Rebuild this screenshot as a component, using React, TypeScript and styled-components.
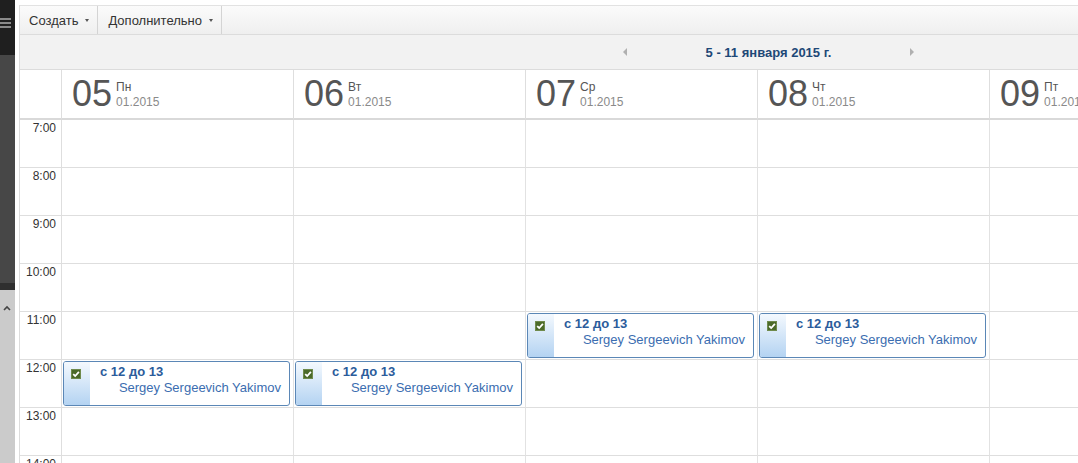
import React from 'react';
import styled, { createGlobalStyle } from 'styled-components';

const GlobalStyle = createGlobalStyle`
  html, body { margin: 0; padding: 0; background: #fff; overflow: hidden; }
  body { font-family: Arial, "Liberation Sans", sans-serif; }
`;

const Page = styled.div`
  display: flex;
  width: 1078px;
  height: 463px;
  overflow: hidden;
  background: #fff;
`;

const Sidebar = styled.aside`
  width: 15px;
  flex: none;
  margin-right: 4px;
  display: flex;
  flex-direction: column;
`;

const SideHead = styled.div`
  height: 55px;
  flex: none;
  background: #1f1f1f;
  padding-top: 15px;
  box-sizing: border-box;
`;

const SideBody = styled.div`
  height: 228px;
  flex: none;
  background: #474747;
`;

const SideSeam = styled.div`
  height: 7px;
  flex: none;
  background: #2f2f2f;
`;

const SideFoot = styled.div`
  flex: 1;
  background: #cbcbcb;
  padding: 7px 0 0 3px;
`;

const Main = styled.main`
  flex: 1;
  min-width: 0;
  margin-top: 5px;
  border-left: 1px solid #dcdcdc;
  display: flex;
  flex-direction: column;
  overflow: hidden;
`;

const Toolbar = styled.div`
  flex: none;
  height: 30px;
  box-sizing: border-box;
  border-top: 1px solid #e2e2e2;
  border-bottom: 1px solid #dcdcdc;
  background: linear-gradient(to bottom, #fbfbfb, #efefef);
  display: flex;
`;

const ToolButton = styled.div<{ $padLeft: number }>`
  display: flex;
  align-items: center;
  gap: 7px;
  padding: 0 8px 0 ${(p) => p.$padLeft}px;
  border-right: 1px solid #d4d4d4;
  font-size: 13px;
  color: #333;
`;

const Caret = styled.span`
  width: 0;
  height: 0;
  border-left: 2.5px solid transparent;
  border-right: 2.5px solid transparent;
  border-top: 3px solid #555;
  margin-top: 1px;
`;

const NavBar = styled.div`
  flex: none;
  height: 35px;
  box-sizing: border-box;
  border-bottom: 1px solid #dcdcdc;
  background: #f2f2f2;
  display: flex;
  align-items: center;
  padding-left: 603px;
`;

const NavGroup = styled.div`
  width: 291px;
  display: flex;
  align-items: center;
  justify-content: space-between;
`;

const NavArrow = styled.span<{ $dir: 'left' | 'right' }>`
  width: 0;
  height: 0;
  border-top: 4px solid transparent;
  border-bottom: 4px solid transparent;
  ${(p) =>
    p.$dir === 'left'
      ? 'border-right: 4px solid #b0b0b0;'
      : 'border-left: 4px solid #b0b0b0;'}
`;

const NavTitle = styled.span`
  font-size: 13px;
  font-weight: bold;
  color: #1e4877;
`;

const Grid = styled.div`
  flex: none;
  display: grid;
  grid-template-columns: 42px repeat(5, 232px);
`;

const HeadCell = styled.div`
  height: 50px;
  box-sizing: border-box;
  border-right: 1px solid #dedede;
  border-bottom: 2px solid #d9d9d9;
  display: flex;
  align-items: flex-start;
  padding-left: 10px;
  overflow: hidden;
`;

const DayNum = styled.span`
  font-size: 36px;
  line-height: 36px;
  color: #555;
  margin-top: 6px;
`;

const DayLabels = styled.div`
  margin: 10px 0 0 4px;
  display: flex;
  flex-direction: column;
  font-size: 12px;
  line-height: 15px;
  white-space: nowrap;
`;

const DayName = styled.span`
  color: #555;
`;

const DayDate = styled.span`
  color: #8a8a8a;
`;

const TimeCell = styled.div`
  height: 48px;
  box-sizing: border-box;
  border-right: 1px solid #dedede;
  border-bottom: 1px solid #dedede;
  padding: 1px 5px 0 0;
  text-align: right;
  font-size: 12px;
  line-height: 14px;
  color: #333;
`;

const SlotCell = styled.div`
  height: 48px;
  box-sizing: border-box;
  border-right: 1px solid #e2e2e2;
  border-bottom: 1px solid #dedede;
  padding: 1px 3px 1px 1px;
`;

const Event = styled.div`
  height: 45px;
  box-sizing: border-box;
  border: 1px solid #5b87b6;
  border-radius: 3px;
  background: #fff;
  display: flex;
  overflow: hidden;
`;

const EventStripe = styled.div`
  width: 26px;
  flex: none;
  box-sizing: border-box;
  padding: 3px 0 0 7px;
  background: linear-gradient(to bottom, #f4f9fe, #b4d3f2);
`;

const EventBody = styled.div`
  flex: 1;
  min-width: 0;
  padding: 2px 8px 0 10px;
  display: flex;
  flex-direction: column;
`;

const EventTitle = styled.span`
  font-size: 13px;
  line-height: 15px;
  font-weight: bold;
  color: #2b5c9b;
`;

const EventWho = styled.span`
  margin-top: 1px;
  font-size: 13px;
  line-height: 15px;
  color: #3b6db0;
  text-align: right;
  white-space: nowrap;
`;

const days = [
  { num: '05', name: 'Пн' },
  { num: '06', name: 'Вт' },
  { num: '07', name: 'Ср' },
  { num: '08', name: 'Чт' },
  { num: '09', name: 'Пт' },
];

const hours = [7, 8, 9, 10, 11, 12, 13, 14];

const events: Record<string, boolean> = {
  '11-2': true,
  '11-3': true,
  '12-0': true,
  '12-1': true,
};

const CheckIcon = () => (
  <svg width="10" height="10" viewBox="0 0 10 10">
    <rect x="0" y="0" width="10" height="10" fill="#4b6a2a" />
    <rect x="0.5" y="0.5" width="9" height="9" fill="none" stroke="#6f8a4c" strokeWidth="1" />
    <path d="M2.2 5.1 L4.2 7 L7.9 2.9" fill="none" stroke="#fff" strokeWidth="1.8" />
  </svg>
);

const MenuIcon = () => (
  <svg width="12" height="12" viewBox="0 0 12 12">
    <rect x="0" y="1" width="11" height="2" fill="#8a8a8a" />
    <rect x="0" y="5" width="11" height="2" fill="#8a8a8a" />
    <rect x="0" y="9" width="11" height="2" fill="#8a8a8a" />
  </svg>
);

const ChevronUp = () => (
  <svg width="8" height="6" viewBox="0 0 8 6">
    <path d="M1 5 L4 2 L7 5" fill="none" stroke="#444" strokeWidth="1.6" />
  </svg>
);

export default function App() {
  return (
    <>
      <GlobalStyle />
      <Page>
        <Sidebar>
          <SideHead>
            <MenuIcon />
          </SideHead>
          <SideBody />
          <SideSeam />
          <SideFoot>
            <ChevronUp />
          </SideFoot>
        </Sidebar>
        <Main>
          <Toolbar>
            <ToolButton $padLeft={9}>
              Создать <Caret />
            </ToolButton>
            <ToolButton $padLeft={10}>
              Дополнительно <Caret />
            </ToolButton>
          </Toolbar>
          <NavBar>
            <NavGroup>
              <NavArrow $dir="left" />
              <NavTitle>5 - 11 января 2015 г.</NavTitle>
              <NavArrow $dir="right" />
            </NavGroup>
          </NavBar>
          <Grid>
            <HeadCell />
            {days.map((d) => (
              <HeadCell key={d.num}>
                <DayNum>{d.num}</DayNum>
                <DayLabels>
                  <DayName>{d.name}</DayName>
                  <DayDate>01.2015</DayDate>
                </DayLabels>
              </HeadCell>
            ))}
            {hours.map((h) => (
              <React.Fragment key={h}>
                <TimeCell>{h}:00</TimeCell>
                {days.map((d, i) => (
                  <SlotCell key={d.num}>
                    {events[`${h}-${i}`] && (
                      <Event>
                        <EventStripe>
                          <CheckIcon />
                        </EventStripe>
                        <EventBody>
                          <EventTitle>с 12 до 13</EventTitle>
                          <EventWho>Sergey Sergeevich Yakimov</EventWho>
                        </EventBody>
                      </Event>
                    )}
                  </SlotCell>
                ))}
              </React.Fragment>
            ))}
          </Grid>
        </Main>
      </Page>
    </>
  );
}
